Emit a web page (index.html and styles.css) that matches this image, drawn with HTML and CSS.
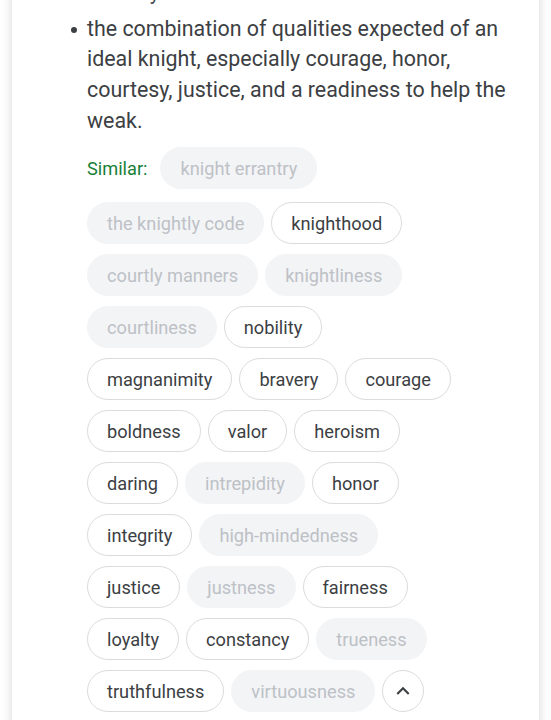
FILE: index.html
```html
<!DOCTYPE html>
<html>
<head>
<meta charset="utf-8">
<link rel="stylesheet" href="styles.css">
</head>
<body>
<div class="card">
  <div class="prev">chivalry</div>
  <ul class="defs">
    <li>the combination of qualities expected of an ideal knight, especially courage, honor, courtesy, justice, and a readiness to help the weak.</li>
  </ul>
  <div class="similar">
    <div class="row head">
      <span class="label">Similar:</span>
      <span class="chip off">knight errantry</span>
    </div>
    <div class="rows">
      <div class="row"><span class="chip off">the knightly code</span><span class="chip">knighthood</span></div>
      <div class="row"><span class="chip off">courtly manners</span><span class="chip off">knightliness</span></div>
      <div class="row"><span class="chip off">courtliness</span><span class="chip">nobility</span></div>
      <div class="row"><span class="chip">magnanimity</span><span class="chip">bravery</span><span class="chip">courage</span></div>
      <div class="row"><span class="chip">boldness</span><span class="chip">valor</span><span class="chip">heroism</span></div>
      <div class="row"><span class="chip">daring</span><span class="chip off">intrepidity</span><span class="chip">honor</span></div>
      <div class="row"><span class="chip">integrity</span><span class="chip off">high-mindedness</span></div>
      <div class="row"><span class="chip">justice</span><span class="chip off">justness</span><span class="chip">fairness</span></div>
      <div class="row"><span class="chip">loyalty</span><span class="chip">constancy</span><span class="chip off">trueness</span></div>
      <div class="row"><span class="chip">truthfulness</span><span class="chip off">virtuousness</span><span class="chip round"><svg width="26" height="26" viewBox="0 0 24 24"><path d="M7.41 15.41 12 10.83l4.59 4.58L18 14l-6-6-6 6z" fill="#3c4043"/></svg></span></div>
    </div>
  </div>
</div>
</body>
</html>
```
FILE: styles.css
```css
html, body {
  margin: 0;
  padding: 0;
  background: #ffffff;
}
body {
  font-family: Roboto, "Noto Sans", Arial, sans-serif;
  color: #3c4043;
  overflow: hidden;
}
.card {
  margin: -23px 12px 0 12px;
  background: #ffffff;
  box-shadow: 0 0 10px rgba(0, 0, 0, 0.16);
  padding: 0 22px 40px 75px;
  min-height: 800px;
}
.prev {
  font-size: 21.4px;
  line-height: 30.5px;
  color: #4d5156;
}
.defs {
  margin: 6px 0 0 0;
  padding: 0;
  list-style: none;
}
.defs li {
  position: relative;
  font-size: 21.4px;
  line-height: 30.67px;
  color: #3c4043;
}
.defs li::before {
  content: "";
  position: absolute;
  left: -16px;
  top: 13px;
  width: 6px;
  height: 6px;
  border-radius: 50%;
  background: #3c4043;
}
.similar {
  margin-top: 11px;
}
.row {
  display: flex;
  align-items: center;
  gap: 7px;
}
.row.head {
  gap: 13px;
  margin-bottom: 13px;
}
.rows {
  display: flex;
  flex-direction: column;
  gap: 10px;
}
.label {
  font-size: 18.2px;
  color: #188038;
}
.chip {
  box-sizing: border-box;
  height: 42px;
  display: inline-flex;
  align-items: center;
  padding: 0 19px;
  border: 1px solid #dadce0;
  border-radius: 21px;
  font-size: 18.2px;
  color: #3c4043;
  background: #ffffff;
  white-space: nowrap;
}
.chip.off {
  border-color: #f3f4f6;
  background: #f3f4f6;
  color: #bdc1c6;
}
.chip.round {
  width: 42px;
  padding: 0;
  justify-content: center;
}
.chip.round svg {
  display: block;
}
```
